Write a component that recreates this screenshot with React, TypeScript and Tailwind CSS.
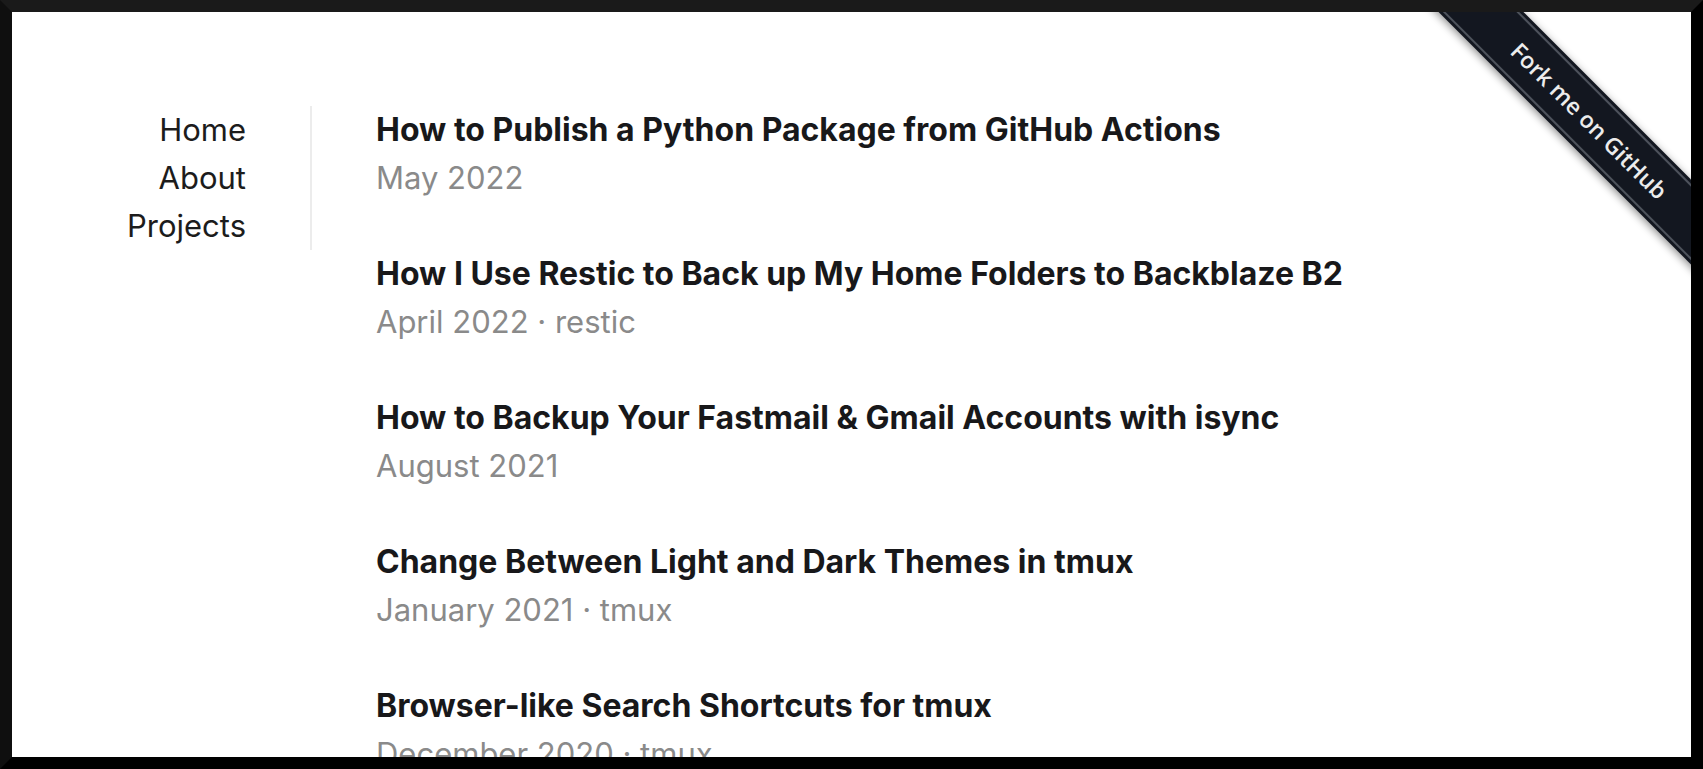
import React from "react"

const posts = [
  { title: "How to Publish a Python Package from GitHub Actions", meta: "May 2022" },
  { title: "How I Use Restic to Back up My Home Folders to Backblaze B2", meta: "April 2022 · restic" },
  { title: "How to Backup Your Fastmail & Gmail Accounts with isync", meta: "August 2021" },
  { title: "Change Between Light and Dark Themes in tmux", meta: "January 2021 · tmux" },
  { title: "Browser-like Search Shortcuts for tmux", meta: "December 2020 · tmux" },
]

function ForkRibbon() {
  return (
    <div className="absolute top-0 right-0 w-[300px] h-[300px] overflow-hidden pointer-events-none">
      <a
        href="#"
        className="absolute left-[-5px] top-[75px] w-[400px] h-[60px] rotate-45 bg-[#131720] shadow-[0_2px_8px_rgba(0,0,0,0.45)] flex items-center justify-center pl-[10px] pointer-events-auto"
      >
        {/* stitched edges */}
        <span className="absolute inset-x-0 top-[3px] bottom-[3px] border-y-2 border-[#4d525b]"></span>
        <span className="relative text-[23px] font-semibold text-[#ececec]" style={{ fontFamily: '"Open Sans", "DejaVu Sans", sans-serif' }}>
          Fork me on GitHub
        </span>
      </a>
    </div>
  )
}

export default function App() {
  return (
    <div
      className="relative h-[769px] w-full overflow-hidden bg-white border-[12px] border-t-[#1a1a1a] border-l-[#0f0f0f] border-r-black border-b-black"
      style={{ fontFamily: 'Inter, "Noto Sans", sans-serif' }}
    >
      <div className="flex pt-[94px]">
        {/* Sidebar nav */}
        <nav className="w-[300px] shrink-0 self-start border-r-2 border-[#ececec] pr-16 text-right text-[31px] leading-[48px] text-[#1c1c1c]">
          <a href="#" className="block">Home</a>
          <a href="#" className="block">About</a>
          <a href="#" className="block">Projects</a>
        </nav>

        {/* Post list */}
        <main className="flex flex-col gap-12 pl-16">
          {posts.map((p) => (
            <article key={p.title} className="leading-[48px]">
              <h2 className="text-[32px] font-bold text-[#18181a]">{p.title}</h2>
              <div className="text-[31px] text-[#8a8a8a]">{p.meta}</div>
            </article>
          ))}
        </main>
      </div>

      <ForkRibbon />
    </div>
  )
}
